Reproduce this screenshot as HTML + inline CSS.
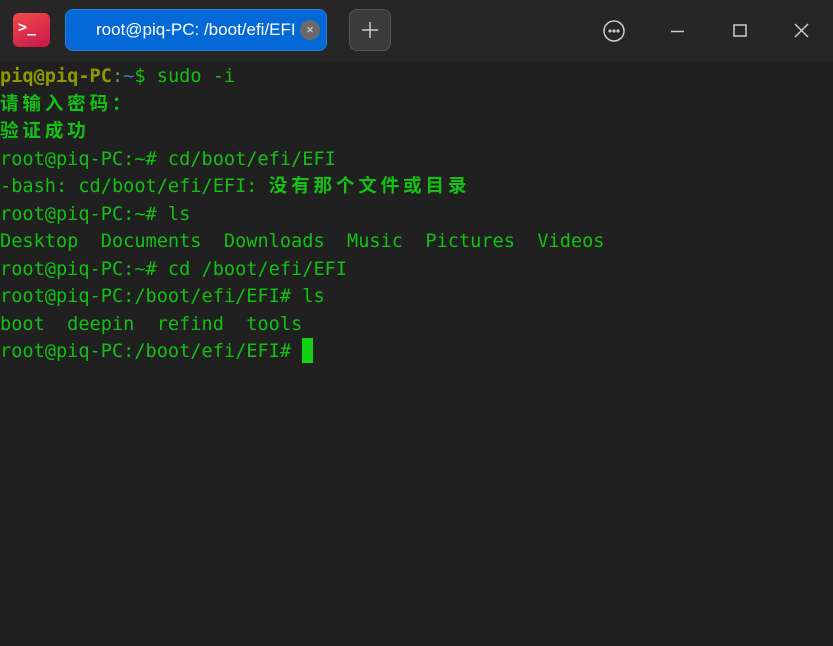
<!DOCTYPE html>
<html><head><meta charset="utf-8"><style>
body{margin:0;width:833px;height:646px;background:#202020;overflow:hidden;font-family:"DejaVu Sans Mono","Liberation Mono",monospace}
.top{position:absolute;left:0;top:0;width:833px;height:61px;background:#262626}
.logo{position:absolute;left:13px;top:13px;width:37px;height:34px;border-radius:6px;background:linear-gradient(160deg,#f04a4a,#c8184a);color:#fff;font:bold 15px "DejaVu Sans Mono",monospace;line-height:28px;padding-left:5px;box-sizing:border-box}
.tab{position:absolute;left:65px;top:9px;width:262px;height:42px;border-radius:8px;background:#0468d6;border:1px solid #2a80e0;box-sizing:border-box;color:#fff;font:17px "Liberation Sans",sans-serif;line-height:40px;padding-left:30px;white-space:nowrap;overflow:hidden}
.x{position:absolute;left:300px;top:20px;width:20px;height:20px;border-radius:50%;background:#6a6a6a;color:#ddd;font:13px "Liberation Sans",sans-serif;text-align:center;line-height:20px}
.plus{position:absolute;left:349px;top:9px;width:42px;height:42px;border-radius:8px;background:#3c3c3c;border:1px solid #555;box-sizing:border-box}
.term{position:absolute;left:0;top:63px;font-size:18.6px;color:#13c013;white-space:pre}
.term div{height:27.5px;line-height:27.5px;overflow:visible}
.c{font-family:"Noto Sans CJK SC",sans-serif;font-weight:bold;letter-spacing:3.8px;line-height:10px}
.u{color:#8a9a00;font-weight:bold}.g{color:#7a8c70}.b{color:#3c78c0}
.cur{display:inline-block;width:11px;height:25px;background:#13d413;vertical-align:-6px}
</style></head><body>
<div class="top"></div>
<div class="logo">&gt;_</div>
<div class="tab">root@piq-PC: /boot/efi/EFI</div>
<div class="x">×</div>
<div class="plus"><svg width="40" height="40"><path d="M20 12v16M12 20h16" stroke="#ccc" stroke-width="1.5"/></svg></div>
<svg style="position:absolute;left:600px;top:18px" width="220" height="26">
<circle cx="14" cy="13" r="10" fill="none" stroke="#ccc" stroke-width="1.5"/><circle cx="10" cy="13" r="1.6" fill="#ccc"/><circle cx="14" cy="13" r="1.6" fill="#ccc"/><circle cx="18" cy="13" r="1.6" fill="#ccc"/>
<path d="M71 13.5h13" stroke="#ccc" stroke-width="1.5"/>
<rect x="134" y="7" width="12" height="11" fill="none" stroke="#ccc" stroke-width="1.5"/>
<path d="M195 6l13 13M208 6l-13 13" stroke="#ccc" stroke-width="1.5"/>
</svg>
<div class="term"><div><span class="u">piq@piq-PC</span><span class="g">:</span><span class="b">~</span>$ sudo -i</div><div><span class="c">请输入密码：</span></div><div><span class="c">验证成功</span></div><div>root@piq-PC:~# cd/boot/efi/EFI</div><div>-bash: cd/boot/efi/EFI: <span class="c">没有那个文件或目录</span></div><div>root@piq-PC:~# ls</div><div>Desktop  Documents  Downloads  Music  Pictures  Videos</div><div>root@piq-PC:~# cd /boot/efi/EFI</div><div>root@piq-PC:/boot/efi/EFI# ls</div><div>boot  deepin  refind  tools</div><div>root@piq-PC:/boot/efi/EFI# <span class="cur"></span></div></div>
</body></html>
